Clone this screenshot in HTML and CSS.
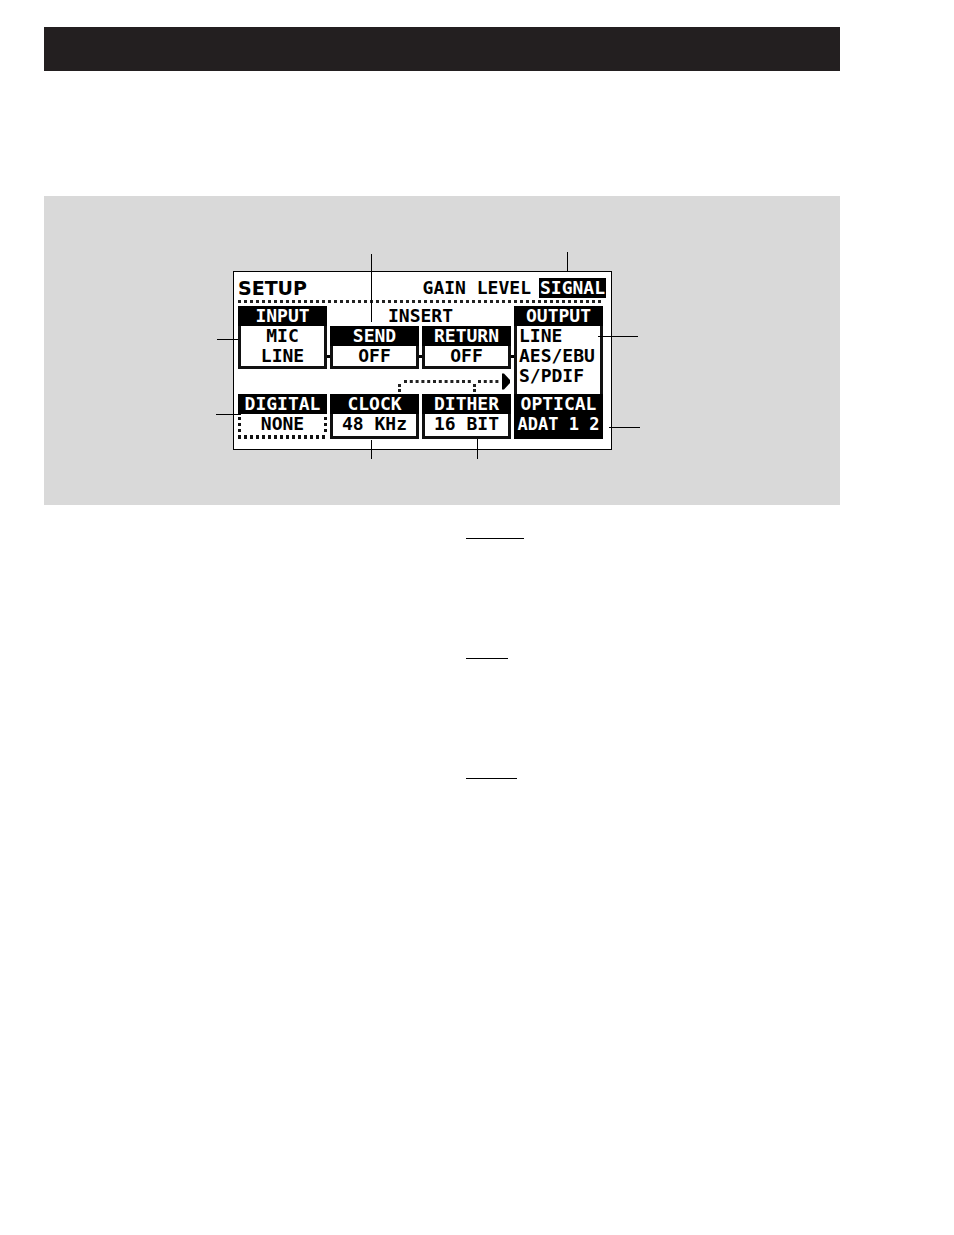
FILE: index.html
```
<!DOCTYPE html>
<html lang="en">
<head>
    <meta charset="utf-8">
    <title>Setup</title>
    <link rel="stylesheet" href="styles.css">
</head>
<body>
    <header class="title-bar"></header>

    <main>
        <figure class="diagram">
            <div class="screen">
                <div class="screen-head">
                    <h1 class="screen-title">SETUP</h1>
                    <span class="tabs">GAIN LEVEL</span>
                    <span class="tabs active">SIGNAL</span>
                </div>
                <div class="dots"></div>

                <div class="panels">
                    <section class="panel input linked">
                        <h2>INPUT</h2>
                        <div class="body">MIC<br>LINE</div>
                    </section>

                    <h2 class="insert-label">INSERT</h2>
                    <section class="panel send linked">
                        <h2>SEND</h2>
                        <div class="body">OFF</div>
                    </section>
                    <section class="panel return linked">
                        <h2>RETURN</h2>
                        <div class="body">OFF</div>
                    </section>

                    <section class="panel output">
                        <h2>OUTPUT</h2>
                        <div class="body">LINE<br>AES/EBU<br>S/PDIF</div>
                        <h2>OPTICAL</h2>
                        <div class="optical">ADAT 1 2</div>
                    </section>

                    <!-- dotted path from clock and dither to the output -->
                    <svg class="route" viewBox="0 0 181 25">
                        <path d="M74 12.5H142M148 12.5H169" stroke="#222" stroke-width="3" stroke-dasharray="3 2.8" fill="none"/>
                        <path d="M68 15h3v3h-3zM68 20h3v3h-3zM143 15h3v3h-3zM143 20h3v3h-3z" fill="#222"/>
                        <path d="M172 4.500h2L180 11v3L174 20.500h-2z" fill="#000"/>
                    </svg>

                    <section class="panel digital">
                        <h2>DIGITAL</h2>
                        <div class="body">NONE</div>
                    </section>
                    <section class="panel clock">
                        <h2>CLOCK</h2>
                        <div class="body">48 KHz</div>
                    </section>
                    <section class="panel dither">
                        <h2>DITHER</h2>
                        <div class="body">16 BIT</div>
                    </section>
                </div>

                <!-- callout lines -->
                <svg class="leads" viewBox="0 0 377 177">
                    <path d="M137 -18h1v68h-1zM333 -20h1v19h-1zM-17 67h21v1h-21zM364 64h40v1h-40z"/>
                    <path d="M-18 142h25v1h-25zM375 155h31v1h-31zM137 168h1v19h-1zM243 167h1v20h-1z"/>
                </svg>
            </div>
        </figure>

        <div class="notes">
            <hr class="rule output-rule">
            <hr class="rule line-rule">
            <hr class="rule aes-rule">
        </div>
    </main>
</body>
</html>
```
FILE: styles.css
```
body {
    margin: 0;
    padding: 27px 114px 0 44px;
    background-color: #fff;
    color: #000;
    font-family: "DejaVu Sans Mono", monospace;
}

.title-bar {
    height: 44px;
    background-color: #231f20;
}

/* Grey area behind the display */
.diagram {
    margin: 125px 0 0;
    padding: 75px 0 55px 189px;
    background-color: #d9d9d9;
}

/* The display */
.screen {
    position: relative;
    box-sizing: border-box;
    width: 379px;
    padding: 6px 5px 10px 4px;
    border: 1px solid #000;
    background-color: #fff;
    font-size: 18px;
    font-weight: bold;
    line-height: 20px;
}

.screen-head {
    display: flex;
    gap: 8px;
}

.screen-title {
    flex: 1;
    margin: 0;
    font-family: "DejaVu Sans", sans-serif;
    font-size: 19px;
    line-height: 20px;
}

.active {
    padding: 0 1px;
    background-color: #000;
    color: #fff;
}

.dots {
    height: 3px;
    margin: 2px 3px 3px 0;
    background: repeating-linear-gradient(to right, #222 0 3px, transparent 3px 6px);
}

.panels {
    display: grid;
    grid-template-columns: repeat(4, 1fr);
    grid-template-rows: 20px 43px 25px 45px;
    column-gap: 3px;
    margin-right: 3px;
}

.panels h2 {
    margin: 0;
    font-size: 18px;
    line-height: 20px;
    text-align: center;
}

.panel {
    position: relative;
    display: flex;
    flex-direction: column;
    min-width: 0;
}

.panel h2 {
    background-color: #000;
    color: #fff;
}

.body {
    flex: 1;
    border: solid #111;
    border-width: 0 3px 3px;
    text-align: center;
}

/* Short link to the next panel */
.linked::after {
    content: "";
    position: absolute;
    right: -3px;
    bottom: 11px;
    width: 3px;
    height: 3px;
    background-color: #000;
}

.input {
    grid-area: 1 / 1 / 3 / 2;
}

.insert-label {
    grid-area: 1 / 2 / 2 / 4;
}

.send {
    grid-area: 2 / 2;
}

.return {
    grid-area: 2 / 3;
}

.output {
    grid-area: 1 / 4 / 5 / 5;
    white-space: nowrap;
}

.output .body {
    border-bottom: 0;
    padding-left: 2px;
    text-align: left;
}

.optical {
    height: 25px;
    background-color: #000;
    color: #fff;
    font-size: 17px;
    text-align: center;
}

.route {
    grid-area: 3 / 2 / 4 / 4;
    width: 100%;
    height: 25px;
}

.digital {
    grid-area: 4 / 1;
}

.clock {
    grid-area: 4 / 2;
}

.dither {
    grid-area: 4 / 3;
}

.digital .body {
    border-color: transparent;
    background:
        repeating-linear-gradient(to right, #111 0 3px, transparent 3px 6px) left bottom / 100% 4px no-repeat border-box,
        repeating-linear-gradient(to bottom, transparent 0 3px, #111 3px 6px) left top / 3px 21px no-repeat border-box,
        repeating-linear-gradient(to bottom, transparent 0 3px, #111 3px 6px) right top / 3px 21px no-repeat border-box;
}

.leads {
    position: absolute;
    top: 0;
    left: 0;
    width: 377px;
    height: 177px;
    overflow: visible;
}

/* Underlines in the right text column */
.notes {
    display: flex;
    flex-direction: column;
    gap: 119px;
    margin-left: 53%;
    padding-top: 33px;
}

.rule {
    height: 1px;
    margin: 0;
    border: 0;
    background-color: #000;
}

.output-rule {
    width: 58px;
}

.line-rule {
    width: 42px;
}

.aes-rule {
    width: 51px;
}
```
